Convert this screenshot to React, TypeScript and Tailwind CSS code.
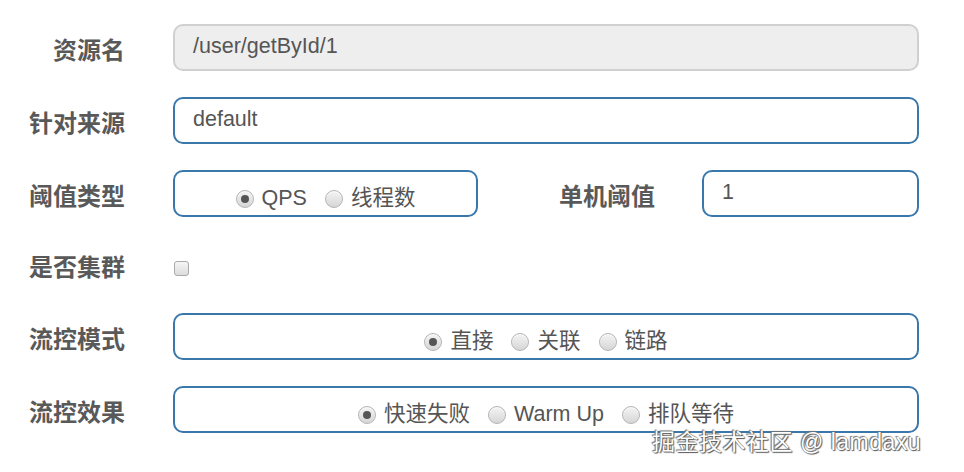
import React from "react"

const FONT = { fontFamily: '"Liberation Sans", Arial, "Noto Sans CJK SC", sans-serif' }

function Label({ children, className = "" }: { children: React.ReactNode; className?: string }) {
  return (
    <div className={`text-right text-[24px] font-bold text-[#595959] leading-none pt-[6px] ${className}`}>
      {children}
    </div>
  )
}

function Radio({ label, checked }: { label: string; checked?: boolean }) {
  return (
    <label className="flex items-center gap-[8px]">
      <span className="w-[18px] h-[18px] rounded-full border border-[#b4b4b4] bg-gradient-to-b from-[#f4f4f4] to-[#d6d6d6] flex items-center justify-center shadow-[inset_0_1px_1px_rgba(255,255,255,0.8)]">
        {checked && <span className="w-[8px] h-[8px] rounded-full bg-[#555]" />}
      </span>
      <span className="text-[21.5px] text-[#555]">{label}</span>
    </label>
  )
}

function RadioBox({ items, className = "" }: { items: { label: string; checked?: boolean }[]; className?: string }) {
  return (
    <div
      className={`h-[47px] rounded-[10px] border-2 border-[#3a77aa] bg-white flex items-center justify-center gap-[18px] pt-[10px] ${className}`}
    >
      {items.map((it) => (
        <Radio key={it.label} label={it.label} checked={it.checked} />
      ))}
    </div>
  )
}

function TextBox({ value, disabled, className = "" }: { value: string; disabled?: boolean; className?: string }) {
  return (
    <div
      className={`h-[47px] rounded-[10px] border-2 flex items-center pl-[18px] pb-[2px] text-[21.5px] text-[#555] ${
        disabled ? "bg-[#eeeeee] border-[#d0d0d0]" : "bg-white border-[#3a77aa]"
      } ${className}`}
    >
      {value}
    </div>
  )
}

export default function App() {
  return (
    <div className="relative w-[964px] h-[472px] bg-white overflow-hidden" style={FONT}>
      <div className="flex flex-col gap-[26px] pt-[24px] pr-[45px]">
        <div className="flex items-center">
          <Label className="w-[125px]">资源名</Label>
          <TextBox value="/user/getById/1" disabled className="ml-[48px] flex-1" />
        </div>

        <div className="flex items-center">
          <Label className="w-[125px]">针对来源</Label>
          <TextBox value="default" className="ml-[48px] flex-1" />
        </div>

        <div className="flex items-center">
          <Label className="w-[125px]">阈值类型</Label>
          <RadioBox
            className="ml-[48px] w-[305px]"
            items={[{ label: "QPS", checked: true }, { label: "线程数" }]}
          />
          <Label className="w-[177px]">单机阈值</Label>
          <TextBox value="1" className="ml-[47px] flex-1" />
        </div>

        <div className="flex items-center h-[44px]">
          <Label className="w-[125px]">是否集群</Label>
          <span className="ml-[49px] mt-[6px] w-[15px] h-[15px] rounded-[3px] border border-[#aaa] bg-gradient-to-b from-[#f6f6f6] to-[#dcdcdc]" />
        </div>

        <div className="flex items-center">
          <Label className="w-[125px]">流控模式</Label>
          <RadioBox
            className="ml-[48px] flex-1"
            items={[{ label: "直接", checked: true }, { label: "关联" }, { label: "链路" }]}
          />
        </div>

        <div className="flex items-center">
          <Label className="w-[125px]">流控效果</Label>
          <RadioBox
            className="ml-[48px] flex-1"
            items={[{ label: "快速失败", checked: true }, { label: "Warm Up" }, { label: "排队等待" }]}
          />
        </div>
      </div>

      <div
        className="absolute left-[652px] top-[425px] text-[23px] text-white tracking-[0.5px]"
        style={{ textShadow: "0 0 1px #555, 1px 1px 1px #555, -1px -1px 1px #777" }}
      >
        掘金技术社区 @ lamdaxu
      </div>
    </div>
  )
}
